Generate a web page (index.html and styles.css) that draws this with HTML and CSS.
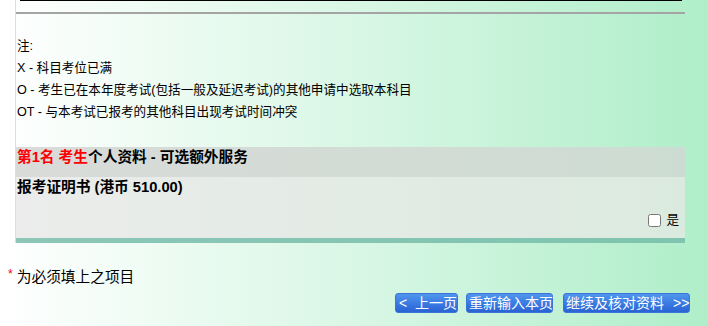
FILE: index.html
```html
<!DOCTYPE html>
<html lang="zh">
<head>
<meta charset="utf-8">
<title>个人资料 - 可选额外服务</title>
<link rel="stylesheet" href="styles.css">
</head>
<body>
<div class="wrap">
  <div class="topline"></div>
  <div class="rule"></div>
  <div class="notes">
    <div>注:</div>
    <div>X - 科目考位已满</div>
    <div>O - 考生已在本年度考试(包括一般及延迟考试)的其他申请中选取本科目</div>
    <div>OT - 与本考试已报考的其他科目出现考试时间冲突</div>
  </div>
  <div class="sec-head"><span class="red">第1名 考生</span>个人资料 - 可选额外服务</div>
  <div class="sec-body">
    <div class="item-title">报考证明书 (港币 510.00)</div>
    <label class="item-check"><input type="checkbox" class="cb"> 是</label>
  </div>
  <div class="sec-foot"></div>
</div>
<div class="required"><sup class="star">*</sup> 为必须填上之项目</div>
<div class="buttons">
  <button class="btn btn-prev" type="button">&lt; &nbsp;上一页</button>
  <button class="btn btn-reset" type="button">重新输入本页</button>
  <button class="btn btn-next" type="button">继续及核对资料<span class="arrows">&gt;&gt;</span></button>
</div>
</body>
</html>
```
FILE: styles.css
```css
html, body {
  margin: 0;
  padding: 0;
}
body {
  width: 708px;
  height: 326px;
  overflow: hidden;
  background: linear-gradient(to right, #ffffff 0%, #d9f7e5 50%, #afeec9 100%);
  font-family: "Liberation Sans", "Noto Sans CJK SC", sans-serif;
  color: #000;
}
.wrap {
  margin-left: 15px;
  width: 669px;
  border-left: 1px solid #d9dfdb;
  border-right: 1px solid #d4dcd7;
}
.topline {
  height: 1px;
  background: #000;
  margin: 0 3px 0 4px;
}
.rule {
  margin-top: 11px;
  height: 2px;
  background: #a4a4a4;
}
.notes {
  margin-top: 21px;
  font-size: 12.6px;
  line-height: 22px;
  padding-left: 1px;
}
.sec-head {
  margin-top: 24px;
  height: 30px;
  line-height: 20px;
  padding-left: 1px;
  font-size: 14.7px;
  font-weight: bold;
  background: linear-gradient(to right, #d9dbd9, #cddcd2);
}
.red {
  color: #ff0000;
}
.sec-body {
  height: 61px;
  background: linear-gradient(to right, #ebeceb, #dbeadf);
  display: flex;
  flex-direction: column;
}
.item-title {
  font-size: 14.7px;
  font-weight: bold;
  line-height: 20px;
  padding-left: 1px;
}
.item-check {
  margin-top: 14px;
  align-self: flex-end;
  margin-right: 6px;
  font-size: 12.6px;
  line-height: 18px;
  display: flex;
  align-items: center;
}
.cb {
  width: 13px;
  height: 13px;
  margin: 0 5px 0 0;
}
.sec-foot {
  height: 5px;
  background: linear-gradient(to right, #8dc6b7, #7ec4ae);
}
.required {
  margin-top: 24px;
  padding-left: 8px;
  font-size: 14.7px;
  line-height: 20px;
}
.star {
  color: #ff0000;
  font-size: 12px;
  vertical-align: 4px;
  line-height: 0;
}
.buttons {
  margin-top: 6px;
  display: flex;
  justify-content: flex-end;
  padding-right: 18px;
}
.btn {
  height: 20px;
  padding: 0 2px;
  border: 1px solid #3a74d8;
  border-radius: 3px;
  background: linear-gradient(to bottom, #5096ee 0%, #3a7ce2 50%, #2a63d4 100%);
  color: #fff;
  font-family: "Liberation Sans", "Noto Sans CJK SC", sans-serif;
  font-size: 14px;
  line-height: 18px;
  white-space: nowrap;
  cursor: pointer;
}
.btn-prev {
  width: 63px;
  padding-left: 3px;
  text-align: left;
}
.btn-reset {
  width: 87px;
  margin-left: 8px;
}
.btn-next {
  width: 127px;
  margin-left: 10px;
  text-align: left;
}
.arrows {
  margin-left: 9px;
}
```
